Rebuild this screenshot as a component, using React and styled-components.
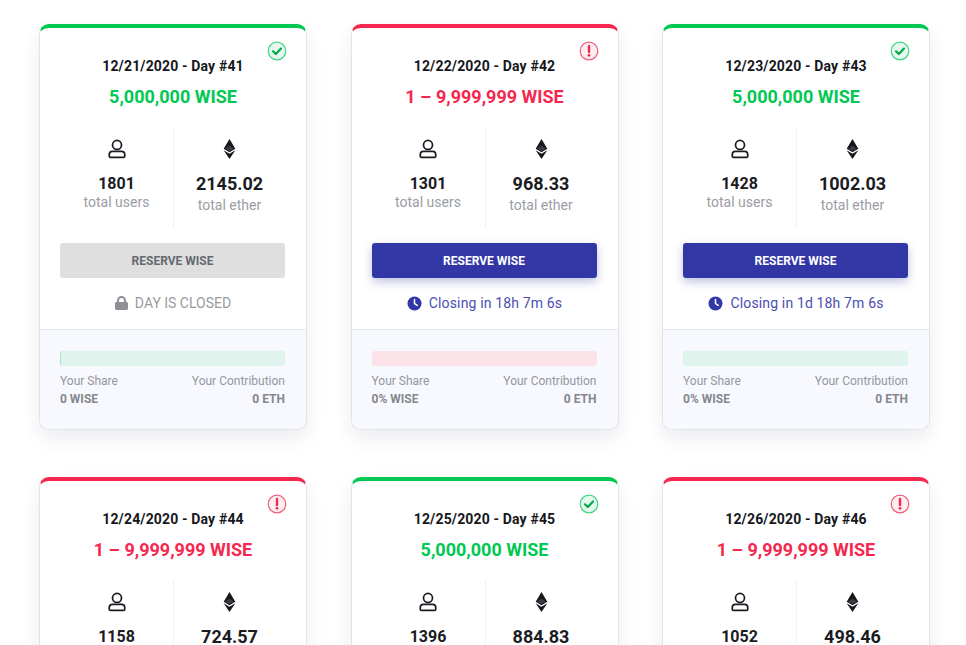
import React from "react";
import styled, { createGlobalStyle } from "styled-components";

const Global = createGlobalStyle`
  html, body { margin: 0; padding: 0; background: #fff; height: 645px; overflow: hidden; }
  body { font-family: Roboto, "Liberation Sans", sans-serif; }
`;

const GREEN = "#00c853";
const RED = "#f5274e";
const BLUE = "#3337a6";

const Grid = styled.div`
  display: grid;
  grid-template-columns: repeat(3, 268px);
  column-gap: 43.5px;
  row-gap: 47px;
  padding: 24px 0 0 39px;
`;

const Card = styled.div`
  position: relative;
  box-sizing: border-box;
  height: 406px;
  background: #fff;
  border-radius: 10px;
  border: 1px solid #e2e4e9;
  border-top: 4px solid ${p => (p.$ok ? GREEN : RED)};
  box-shadow: 0 8px 18px rgba(60, 70, 100, 0.1);
  display: flex;
  flex-direction: column;
`;

const Badge = styled.div`
  position: absolute;
  top: 13px;
  right: 19px;
  width: 20px;
  height: 20px;
  display: flex;
`;

const DateLine = styled.div`
  margin-top: 29px;
  text-align: center;
  font-size: 14px;
  line-height: 18px;
  font-weight: 700;
  letter-spacing: 0.15px;
  color: #15171c;
`;

const Amount = styled.div`
  margin-top: 10px;
  text-align: center;
  font-size: 18px;
  line-height: 24px;
  font-weight: 700;
  color: ${p => (p.$ok ? GREEN : RED)};
`;

const Stats = styled.div`
  margin: 18px 21px 0 20px;
  height: 101px;
  display: grid;
  grid-template-columns: 113px 1fr;
`;

const Stat = styled.div`
  display: flex;
  flex-direction: column;
  align-items: center;
  padding-top: 10px;
  & + & { border-left: 1px solid #f0f1f3; }
`;

const IconBox = styled.div`
  height: 24px;
  display: flex;
  align-items: center;
  justify-content: center;
`;

const StatValue = styled.div`
  margin-top: ${p => (p.$big ? "12px" : "13px")};
  font-size: ${p => (p.$big ? "18px" : "16px")};
  line-height: ${p => (p.$big ? "22px" : "20px")};
  font-weight: 700;
  color: #1a1c22;
`;

const StatLabel = styled.div`
  margin-top: ${p => (p.$big ? "1px" : "-1px")};
  font-size: 14px;
  line-height: 18px;
  color: #9a9da3;
`;

const Action = styled.div`
  margin: 15px 21px 0 20px;
  height: 35px;
  border-radius: 3px;
  display: flex;
  align-items: center;
  justify-content: center;
  font-size: 12px;
  font-weight: 700;
  background: ${p => (p.$closed ? "#dfdfdf" : BLUE)};
  color: ${p => (p.$closed ? "#666a70" : "#fff")};
  box-shadow: ${p => (p.$closed ? "none" : "0 4px 10px rgba(51, 55, 166, 0.3)")};
`;

const Status = styled.div`
  margin-top: 15px;
  height: 20px;
  display: flex;
  align-items: center;
  justify-content: center;
  gap: 7px;
  font-size: 14px;
  letter-spacing: ${p => (p.$closed ? "0" : "0.15px")};
  color: ${p => (p.$closed ? "#9a9b9f" : "#4a4eb0")};
`;

const Footer = styled.div`
  flex: 1;
  border-top: 1px solid #e2e5ec;
  border-radius: 0 0 9px 9px;
  background: #f7f9fe;
  margin-top: 16px;
  padding: 21px 21px 0 20px;
`;

const Bar = styled.div`
  height: 15px;
  border-radius: 3px;
  background: ${p => (p.$ok ? "#def4ec" : "#fbe3e9")};
  border-left: ${p => (p.$ok && p.$marked ? "1px solid #a9e2c8" : "0")};
`;

const FooterRow = styled.div`
  display: flex;
  justify-content: space-between;
  font-size: 12px;
  line-height: 16px;
  color: #94979f;
  margin-top: ${p => p.$top}px;
`;

const FooterBold = styled(FooterRow)`
  font-weight: 700;
  color: #85878c;
`;

const Check = () => (
  <svg width="20" height="20" viewBox="0 0 20 20" fill="none">
    <circle cx="10" cy="10" r="8.8" fill="#e6f8ee" stroke="#3fd585" strokeWidth="1.2" />
    <path d="M6 10.3l2.8 2.700 5.200-5.400" stroke="#00a94a" strokeWidth="2.200" strokeLinecap="round" strokeLinejoin="round" />
  </svg>
);

const Alert = () => (
  <svg width="20" height="20" viewBox="0 0 20 20" fill="none">
    <circle cx="10" cy="10" r="8.8" fill="#fdeef1" stroke="#f0607c" strokeWidth="1.2" />
    <path d="M10 5v6" stroke="#f5274e" strokeWidth="2.4" strokeLinecap="round" />
    <circle cx="10" cy="14.3" r="1.4" fill="#f5274e" />
  </svg>
);

const User = () => (
  <svg width="18" height="20" viewBox="0 0 20 22" fill="none" stroke="#1a1c22" strokeWidth="1.9">
    <circle cx="10" cy="6.5" r="5" />
    <path d="M5 13.6h10a3.6 3.6 0 0 1 3.6 3.6v1.800a1.400 1.400 0 0 1-1.400 1.400H2.800a1.400 1.400 0 0 1-1.400-1.400v-1.800A3.600 3.600 0 0 1 5 13.600z" />
  </svg>
);

const Ether = () => (
  <svg width="13" height="20" viewBox="0 0 14 22">
    <path d="M7 0L.6 10.800 7 14.500l6.400-3.700z" fill="#15171c" />
    <path d="M.6 12.400L7 22l6.400-9.600L7 16.100z" fill="#15171c" />
    <path d="M7 7.200l-4.800 3.400L7 13.200l4.800-2.600z" fill="#3a3c42" />
  </svg>
);

const Lock = () => (
  <svg width="13" height="14" viewBox="0 0 13 14">
    <path d="M2 6V4.400a4.500 4.400 0 0 1 9 0V6h.6c.8 0 1.400.6 1.400 1.400v5.200c0 .8-.6 1.400-1.400 1.400H1.400C.6 14 0 13.400 0 12.600V7.400C0 6.600.6 6 1.400 6zm2 0h5V4.400a2.500 2.400 0 0 0-5 0z" fill="#8f9095" />
  </svg>
);

const Clock = () => (
  <svg width="15" height="15" viewBox="0 0 15 15">
    <circle cx="7.500" cy="7.500" r="7" fill={BLUE} />
    <path d="M7.500 3.500v4.200l2.800 1.700" fill="none" stroke="#fff" strokeWidth="1.500" strokeLinecap="round" />
  </svg>
);

const days = [
  { date: "12/21/2020 - Day #41", ok: true, amount: "5,000,000 WISE", users: "1801", ether: "2145.02", closed: true, share: "0 WISE" },
  { date: "12/22/2020 - Day #42", ok: false, amount: "1 – 9,999,999 WISE", users: "1301", ether: "968.33", status: "Closing in 18h 7m 6s", share: "0% WISE" },
  { date: "12/23/2020 - Day #43", ok: true, amount: "5,000,000 WISE", users: "1428", ether: "1002.03", status: "Closing in 1d 18h 7m 6s", share: "0% WISE" },
  { date: "12/24/2020 - Day #44", ok: false, amount: "1 – 9,999,999 WISE", users: "1158", ether: "724.57", status: "Closing in 2d 18h 7m 6s", share: "0% WISE" },
  { date: "12/25/2020 - Day #45", ok: true, amount: "5,000,000 WISE", users: "1396", ether: "884.83", status: "Closing in 3d 18h 7m 6s", share: "0% WISE" },
  { date: "12/26/2020 - Day #46", ok: false, amount: "1 – 9,999,999 WISE", users: "1052", ether: "498.46", status: "Closing in 4d 18h 7m 6s", share: "0% WISE" },
];

export default function App() {
  return (
    <>
      <Global />
      <Grid>
        {days.map(d => (
          <Card key={d.date} $ok={d.ok}>
            <Badge>{d.ok ? <Check /> : <Alert />}</Badge>
            <DateLine>{d.date}</DateLine>
            <Amount $ok={d.ok}>{d.amount}</Amount>
            <Stats>
              <Stat>
                <IconBox><User /></IconBox>
                <StatValue>{d.users}</StatValue>
                <StatLabel>total users</StatLabel>
              </Stat>
              <Stat>
                <IconBox><Ether /></IconBox>
                <StatValue $big>{d.ether}</StatValue>
                <StatLabel $big>total ether</StatLabel>
              </Stat>
            </Stats>
            <Action $closed={d.closed}>RESERVE WISE</Action>
            <Status $closed={d.closed}>
              {d.closed ? <Lock /> : <Clock />}
              {d.closed ? "DAY IS CLOSED" : d.status}
            </Status>
            <Footer>
              <Bar $ok={d.ok} $marked={d.closed} />
              <FooterRow $top={7}><span>Your Share</span><span>Your Contribution</span></FooterRow>
              <FooterBold $top={2}><span>{d.share}</span><span>0 ETH</span></FooterBold>
            </Footer>
          </Card>
        ))}
      </Grid>
    </>
  );
}
